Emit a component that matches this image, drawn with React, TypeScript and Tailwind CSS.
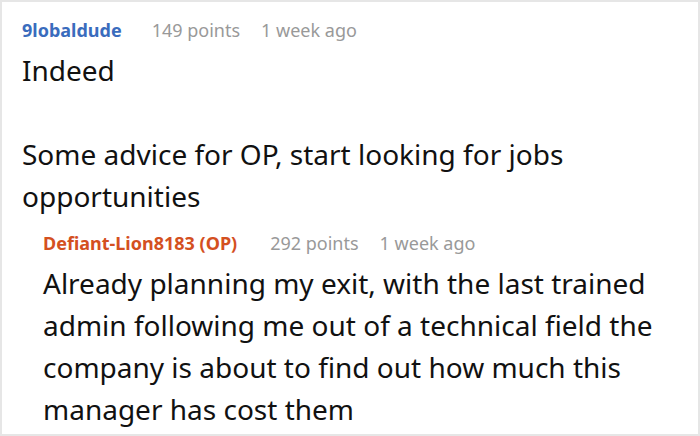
export default function App(){

return(

<div className="w-[700px] h-[436px] bg-white border-2 border-[#e6e6e6] overflow-hidden" style={{fontFamily:"'Noto Sans', 'Open Sans', sans-serif"}}>

<div className="pl-[20px] pt-[16px] pr-4">

{/* COMMENT HEADER */}

<div className="flex items-center h-[24px] text-[18px] leading-[24px]">
<span className="font-bold text-[#3a6cbd]">9lobaldude</span>
<span className="ml-[30px] text-[#999999]">149 points</span>
<span className="ml-[21px] text-[#999999]">1 week ago</span>
</div>

{/* COMMENT BODY */}

<div className="mt-[7px] text-[28px] leading-[42px] text-[#111111]">
<p>Indeed</p>
<p>&nbsp;</p>
<p>Some advice for OP, start looking for jobs opportunities</p>
</div>

{/* REPLY */}

<div className="flex mt-[14px]">

<div className="w-[2px] bg-[#e6e6e6] mt-[11px] mb-[5px]"></div>

<div className="pl-[21px]">

<div className="flex items-center h-[24px] text-[18px] leading-[24px]">
<span className="font-bold text-[#d4501f]">Defiant-Lion8183 (OP)</span>
<span className="ml-[33px] text-[#999999]">292 points</span>
<span className="ml-[21px] text-[#999999]">1 week ago</span>
</div>

<p className="mt-[7px] text-[28px] leading-[42px] text-[#111111] w-[640px]">
Already planning my exit, with the last trained admin following me out of a technical field the company is about to find out how much this manager has cost them
</p>

</div>

</div>

</div>

</div>

)

}
